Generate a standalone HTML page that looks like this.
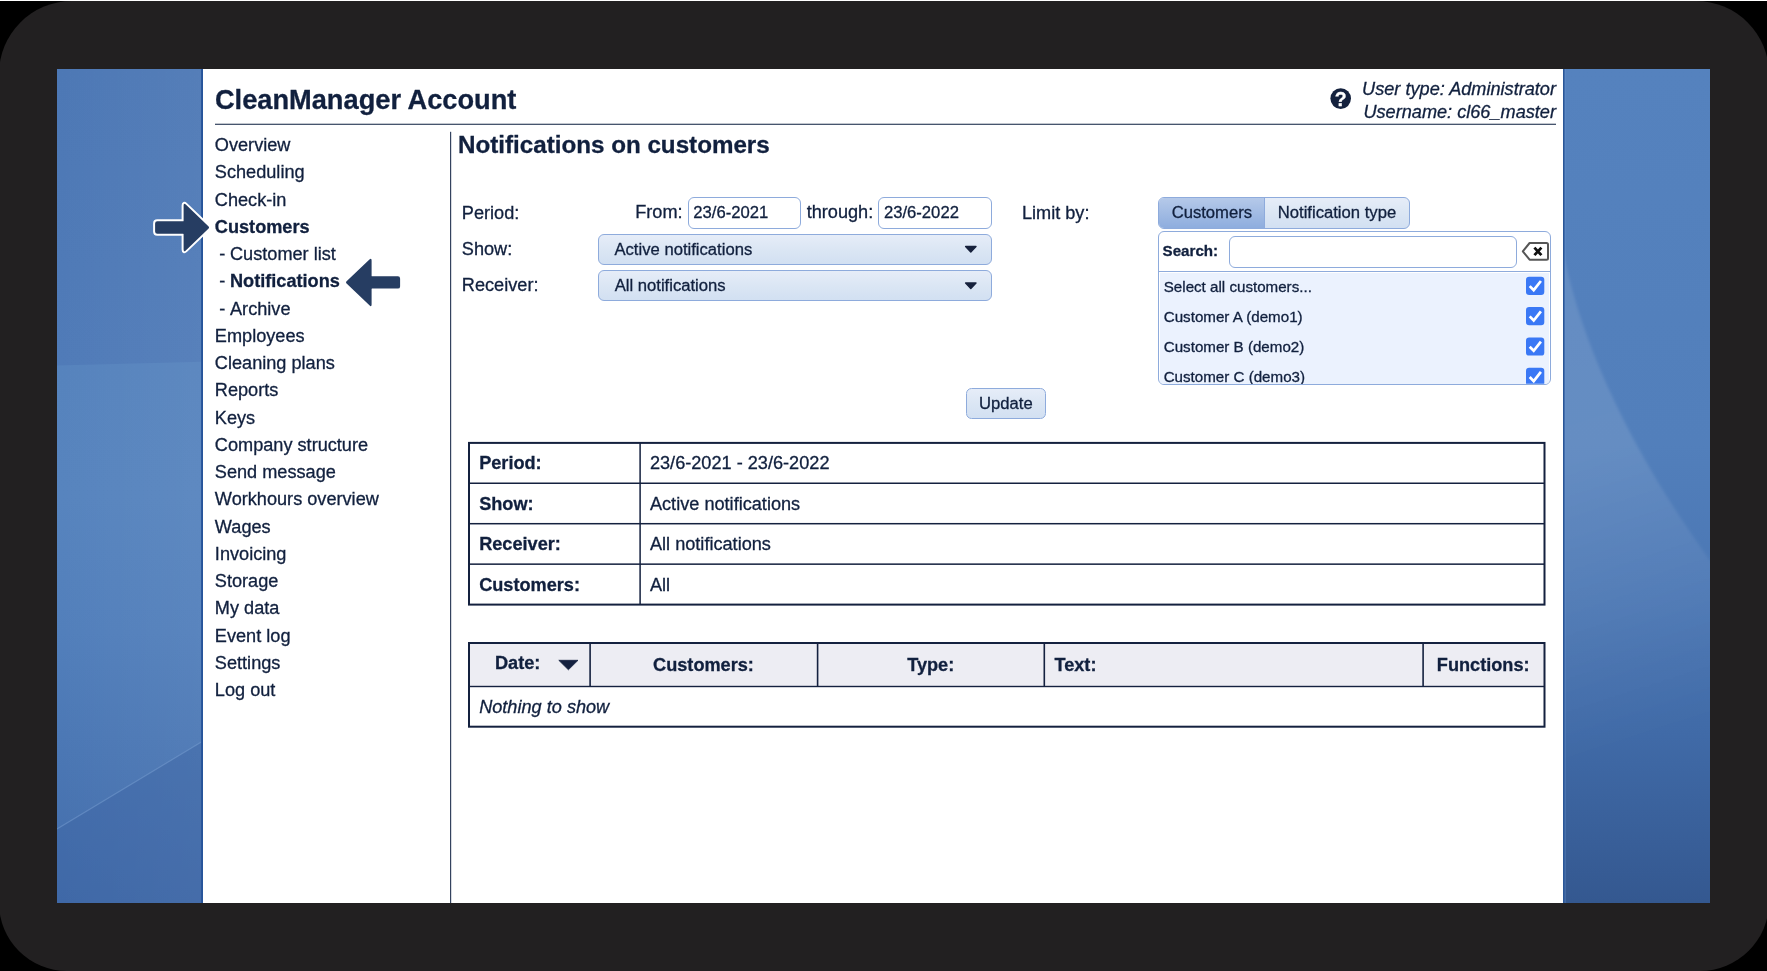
<!DOCTYPE html>
<html><head><meta charset="utf-8"><title>CleanManager Account</title>
<style>
html,body{margin:0;padding:0;}
body{width:1767px;height:971px;overflow:hidden;background:#000;position:relative;font-family:"Liberation Sans",sans-serif;color:#11203e;}
.abs{position:absolute;}
.t{position:absolute;white-space:nowrap;line-height:1;-webkit-text-stroke:0.3px #11203e;}
#topline{left:0;top:0;width:1767px;height:1px;background:#fff;}
#frame{left:-1px;top:1px;width:1769.5px;height:969.5px;border-radius:73px 73px 69px 68px;background:#222021;}
#desk{left:57px;top:69px;width:1653px;height:834px;overflow:hidden;
 background:linear-gradient(180deg,#4d78b5 0%,#507bb8 36%,#4f7bb8 100%);}
#panel{left:203px;top:69px;width:1360px;height:834px;background:#fff;}
.pb{position:absolute;top:69px;width:2px;height:834px;background:#2c5899;}
.sel{position:absolute;box-sizing:border-box;border:1px solid #8eabdc;border-radius:6px;background:linear-gradient(180deg,#e6edf8 0%,#dbe6f4 50%,#d2e0f2 100%);}
.inp{position:absolute;box-sizing:border-box;border:1px solid #8eabdc;border-radius:6px;background:#fff;}
svg{position:absolute;left:0;top:0;overflow:visible;}
</style></head><body>
<div id="root" style="position:absolute;left:0;top:0;width:1767px;height:971px;will-change:transform">
<div id="topline" class="abs"></div>
<div id="frame" class="abs"></div>
<div id="desk" class="abs"></div>

<svg width="1767" height="971" viewBox="0 0 1767 971">
<defs>
<linearGradient id="gR" x1="0" y1="0" x2="0" y2="1"><stop offset="0" stop-color="#5582be"/><stop offset="0.45" stop-color="#527fbb"/><stop offset="0.62" stop-color="#4b77b4"/><stop offset="0.8" stop-color="#406aa7"/><stop offset="1" stop-color="#345890"/></linearGradient>
<linearGradient id="gS" gradientUnits="userSpaceOnUse" x1="1564" y1="300" x2="1700" y2="720"><stop offset="0" stop-color="#fff" stop-opacity="0.10"/><stop offset="0.35" stop-color="#fff" stop-opacity="0.11"/><stop offset="0.7" stop-color="#fff" stop-opacity="0.05"/><stop offset="1" stop-color="#fff" stop-opacity="0"/></linearGradient>
<filter id="bl" x="-10%" y="-10%" width="120%" height="120%"><feGaussianBlur stdDeviation="1.5"/></filter>
<linearGradient id="gL" gradientUnits="userSpaceOnUse" x1="0" y1="362" x2="0" y2="903"><stop offset="0" stop-color="#5683bd"/><stop offset="0.25" stop-color="#5784be"/><stop offset="0.5" stop-color="#527fbb"/><stop offset="0.72" stop-color="#4b77b4"/><stop offset="1" stop-color="#436dab"/></linearGradient>
<linearGradient id="gLx" gradientUnits="userSpaceOnUse" x1="57" y1="0" x2="203" y2="0"><stop offset="0" stop-color="#fff" stop-opacity="0"/><stop offset="1" stop-color="#fff" stop-opacity="0.045"/></linearGradient>
<clipPath id="cd"><rect x="57" y="69" width="1653" height="834"/></clipPath>
</defs>
<g clip-path="url(#cd)">
<rect x="1563" y="69" width="147" height="834" fill="url(#gR)"/>
<path d="M1558 250 L1563 250 C1578 330 1622 440 1714 566 L1714 910 L1558 910 Z" fill="url(#gS)" filter="url(#bl)"/>
<path d="M57 365.5 L203 361.8 L203 903 L57 903 Z" fill="url(#gL)"/>
<rect x="57" y="69" width="146" height="834" fill="url(#gLx)"/>
<path d="M57 829 L203 741 L203 903 L57 903 Z" fill="#3a62a1" opacity="0.36"/>
<path d="M57 829 L203 741" stroke="#7fa3d4" stroke-width="1.2" opacity="0.45" fill="none"/>
</g>
</svg>

<div id="panel" class="abs"></div><svg width="1767" height="971" viewBox="0 0 1767 971"><rect x="201.1" y="69" width="1.9" height="834" fill="#26549a"/><rect x="1563" y="69" width="1.7" height="834" fill="#2a5697"/><rect x="1564.7" y="69" width="0.8" height="834" fill="#6c98d4" opacity="0.6"/></svg>
<div class="t" style="left:214.95px;top:86.16px;font-size:27.22px;font-weight:bold;">CleanManager Account</div>
<div class="t" style="right:211.00px;top:80.34px;font-size:18.15px;font-style:italic;">User type: Administrator</div>
<div class="t" style="right:211.00px;top:102.74px;font-size:18.15px;font-style:italic;">Username: cl66_master</div>
<div class="t" style="left:214.85px;top:136.24px;font-size:18.15px;">Overview</div>
<div class="t" style="left:214.85px;top:163.49px;font-size:18.15px;">Scheduling</div>
<div class="t" style="left:214.85px;top:190.74px;font-size:18.15px;">Check-in</div>
<div class="t" style="left:214.85px;top:217.99px;font-size:18.15px;font-weight:bold;">Customers</div>
<div class="t" style="left:219.25px;top:245.24px;font-size:18.15px;">-</div>
<div class="t" style="left:230.00px;top:245.24px;font-size:18.15px;">Customer list</div>
<div class="t" style="left:219.25px;top:272.49px;font-size:18.15px;">-</div>
<div class="t" style="left:230.00px;top:272.49px;font-size:18.15px;font-weight:bold;">Notifications</div>
<div class="t" style="left:219.25px;top:299.74px;font-size:18.15px;">-</div>
<div class="t" style="left:230.00px;top:299.74px;font-size:18.15px;">Archive</div>
<div class="t" style="left:214.85px;top:326.99px;font-size:18.15px;">Employees</div>
<div class="t" style="left:214.85px;top:354.24px;font-size:18.15px;">Cleaning plans</div>
<div class="t" style="left:214.85px;top:381.49px;font-size:18.15px;">Reports</div>
<div class="t" style="left:214.85px;top:408.74px;font-size:18.15px;">Keys</div>
<div class="t" style="left:214.85px;top:435.99px;font-size:18.15px;">Company structure</div>
<div class="t" style="left:214.85px;top:463.24px;font-size:18.15px;">Send message</div>
<div class="t" style="left:214.85px;top:490.49px;font-size:18.15px;">Workhours overview</div>
<div class="t" style="left:214.85px;top:517.74px;font-size:18.15px;">Wages</div>
<div class="t" style="left:214.85px;top:544.99px;font-size:18.15px;">Invoicing</div>
<div class="t" style="left:214.85px;top:572.24px;font-size:18.15px;">Storage</div>
<div class="t" style="left:214.85px;top:599.49px;font-size:18.15px;">My data</div>
<div class="t" style="left:214.85px;top:626.74px;font-size:18.15px;">Event log</div>
<div class="t" style="left:214.85px;top:653.99px;font-size:18.15px;">Settings</div>
<div class="t" style="left:214.85px;top:681.24px;font-size:18.15px;">Log out</div>
<div class="t" style="left:457.95px;top:133.01px;font-size:24.2px;font-weight:bold;">Notifications on customers</div>
<div class="t" style="left:461.85px;top:203.74px;font-size:18.15px;">Period:</div>
<div class="t" style="left:461.85px;top:239.74px;font-size:18.15px;">Show:</div>
<div class="t" style="left:461.85px;top:276.34px;font-size:18.15px;">Receiver:</div>
<div class="t" style="left:635.25px;top:203.04px;font-size:18.15px;">From:</div>
<div class="t" style="left:806.65px;top:203.04px;font-size:18.15px;">through:</div>
<div class="t" style="left:1021.95px;top:203.74px;font-size:18.15px;">Limit by:</div>
<div class="inp" style="left:687.5px;top:196.8px;width:113.5px;height:32px"></div>
<div class="inp" style="left:877.8px;top:196.8px;width:114px;height:32px"></div>
<div class="t" style="left:693.35px;top:205.11px;font-size:16.65px;">23/6-2021</div>
<div class="t" style="left:883.95px;top:205.11px;font-size:16.65px;">23/6-2022</div>
<div class="sel" style="left:597.7px;top:233.6px;width:394.2px;height:31.3px"></div>
<div class="sel" style="left:597.7px;top:270.1px;width:394.2px;height:31.3px"></div>
<div class="t" style="left:614.45px;top:241.61px;font-size:16.65px;">Active notifications</div>
<div class="t" style="left:614.65px;top:277.51px;font-size:16.65px;">All notifications</div>
<div class="sel" style="left:1157.9px;top:197.4px;width:252.4px;height:31.4px;overflow:hidden"><div style="position:absolute;left:0;top:0;width:104.8px;height:100%;background:linear-gradient(180deg,#b5c9e9,#8eadde);border-right:1px solid #8eabdc"></div></div>
<div class="t" style="left:1171.65px;top:205.11px;font-size:16.65px;">Customers</div>
<div class="t" style="left:1277.75px;top:205.11px;font-size:16.65px;">Notification type</div>
<div class="abs" style="left:1157.9px;top:230.8px;width:393.4px;height:154px;box-sizing:border-box;border:1px solid #8eabdc;border-radius:6px;background:#fff;overflow:hidden"><div style="position:absolute;left:0;top:39.4px;width:100%;height:1px;background:#8eabdc"></div><div style="position:absolute;left:1.3px;top:41.2px;right:1.3px;height:120px;background:#ebf2fe"></div></div>
<div class="t" style="left:1162.55px;top:243.48px;font-size:15.15px;font-weight:bold;">Search:</div>
<div class="inp" style="left:1228.7px;top:235.9px;width:288.6px;height:32px"></div>
<div class="t" style="left:1163.75px;top:279.18px;font-size:15.15px;">Select all customers...</div>
<div class="t" style="left:1163.75px;top:309.48px;font-size:15.15px;">Customer A (demo1)</div>
<div class="t" style="left:1163.75px;top:339.38px;font-size:15.15px;">Customer B (demo2)</div>
<div class="abs" style="left:1160px;top:360px;width:380px;height:23.8px;overflow:hidden"><div class="t" style="left:3.7px;top:9.18px;font-size:15.15px">Customer C (demo3)</div></div>
<div class="sel" style="left:965.8px;top:387.6px;width:80.3px;height:31.2px;border-radius:5.5px"></div>
<div class="t" style="left:1005.90px;transform:translateX(-50%);top:395.51px;font-size:16.65px;">Update</div>
<div class="t" style="left:479.15px;top:454.24px;font-size:18.15px;font-weight:bold;">Period:</div>
<div class="t" style="left:649.95px;top:454.24px;font-size:18.15px;">23/6-2021 - 23/6-2022</div>
<div class="t" style="left:479.15px;top:494.74px;font-size:18.15px;font-weight:bold;">Show:</div>
<div class="t" style="left:649.95px;top:494.74px;font-size:18.15px;">Active notifications</div>
<div class="t" style="left:479.15px;top:535.24px;font-size:18.15px;font-weight:bold;">Receiver:</div>
<div class="t" style="left:649.95px;top:535.24px;font-size:18.15px;">All notifications</div>
<div class="t" style="left:479.15px;top:575.74px;font-size:18.15px;font-weight:bold;">Customers:</div>
<div class="t" style="left:649.95px;top:575.74px;font-size:18.15px;">All</div>
<div class="abs" style="left:469px;top:643px;width:1076px;height:43.5px;background:#ededf3"></div>
<div class="t" style="left:494.95px;top:654.24px;font-size:18.15px;font-weight:bold;">Date:</div>
<div class="t" style="left:703.50px;transform:translateX(-50%);top:655.84px;font-size:18.15px;font-weight:bold;">Customers:</div>
<div class="t" style="left:930.70px;transform:translateX(-50%);top:655.84px;font-size:18.15px;font-weight:bold;">Type:</div>
<div class="t" style="left:1054.45px;top:655.84px;font-size:18.15px;font-weight:bold;">Text:</div>
<div class="t" style="left:1483.20px;transform:translateX(-50%);top:655.84px;font-size:18.15px;font-weight:bold;">Functions:</div>
<div class="t" style="left:479.15px;top:698.34px;font-size:18.15px;font-style:italic;">Nothing to show</div>
<svg width="1767" height="971" viewBox="0 0 1767 971">
<rect x="215" y="123.7" width="1341" height="1.2" fill="#34435f"/>
<rect x="450" y="131.8" width="1.2" height="771.2" fill="#34435f"/>
<circle cx="1340.7" cy="98.6" r="10.3" fill="#14213d"/>
<text x="1340.8" y="105.7" font-family="Liberation Sans" font-weight="bold" font-size="19.4" fill="#fff" stroke="#fff" stroke-width="0.3" text-anchor="middle">?</text>
<rect x="469" y="442.9" width="1075.5" height="161.7" fill="none" stroke="#14213f" stroke-width="2"/>
<rect x="469" y="482.5" width="1075.5" height="1.5" fill="#14213f"/>
<rect x="469" y="522.95" width="1075.5" height="1.5" fill="#14213f"/>
<rect x="469" y="563.4" width="1075.5" height="1.5" fill="#14213f"/>
<rect x="639.35" y="443" width="1.5" height="161.7" fill="#14213f"/>
<rect x="469" y="643" width="1075.5" height="83.7" fill="none" stroke="#14213f" stroke-width="2"/>
<rect x="469" y="685.8" width="1075.5" height="1.4" fill="#14213f"/>
<rect x="589.3000000000001" y="643" width="1.6" height="43.5" fill="#14213f"/>
<rect x="816.8000000000001" y="643" width="1.6" height="43.5" fill="#14213f"/>
<rect x="1043.5" y="643" width="1.6" height="43.5" fill="#14213f"/>
<rect x="1422.3" y="643" width="1.6" height="43.5" fill="#14213f"/>
<path d="M558.8 660.3 L578 660.3 L568.4 669.8 Z" fill="#14213f" stroke="#14213f" stroke-width="0.8" stroke-linejoin="round"/>
<path d="M965.6 246.5 L976 246.5 L970.8 252.1 Z" fill="#17223d" stroke="#17223d" stroke-width="1.4" stroke-linejoin="round"/>
<path d="M965.6 282.90000000000003 L976 282.90000000000003 L970.8 288.5 Z" fill="#17223d" stroke="#17223d" stroke-width="1.4" stroke-linejoin="round"/>
<g><rect x="1526" y="276.8" width="18.3" height="18.2" rx="3.2" fill="#3a78f5"/><path d="M1529.7 286.1 L1533.7 290.2 L1540.9 281.0" fill="none" stroke="#fff" stroke-width="2.7" stroke-linecap="butt" stroke-linejoin="miter"/></g>
<g><rect x="1526" y="307.1" width="18.3" height="18.2" rx="3.2" fill="#3a78f5"/><path d="M1529.7 316.4 L1533.7 320.5 L1540.9 311.3" fill="none" stroke="#fff" stroke-width="2.7" stroke-linecap="butt" stroke-linejoin="miter"/></g>
<g><rect x="1526" y="337.4" width="18.3" height="18.2" rx="3.2" fill="#3a78f5"/><path d="M1529.7 346.7 L1533.7 350.8 L1540.9 341.6" fill="none" stroke="#fff" stroke-width="2.7" stroke-linecap="butt" stroke-linejoin="miter"/></g>
<g clip-path="url(#cpl)"><rect x="1526" y="367.7" width="18.3" height="18.2" rx="3.2" fill="#3a78f5"/><path d="M1529.7 377.0 L1533.7 381.1 L1540.9 371.9" fill="none" stroke="#fff" stroke-width="2.7" stroke-linecap="butt" stroke-linejoin="miter"/></g>
<defs><clipPath id="cpl"><rect x="1158" y="231" width="393" height="152.8"/></clipPath></defs>
<path d="M1529.6 243 L1546.5 243 Q1548 243 1548 244.5 L1548 258.2 Q1548 259.7 1546.5 259.7 L1529.6 259.7 L1522.8 251.3 Z" fill="#fff" stroke="#565656" stroke-width="2" stroke-linejoin="round"/>
<path d="M1534.4 247.6 L1541.4 255.1 M1541.4 247.6 L1534.4 255.1" stroke="#111" stroke-width="2.8" fill="none"/>
<path d="M155.10 223.50 Q155.10 221.30 157.30 221.30 L183.10 221.30 Q183.60 221.30 183.60 220.80 L183.60 205.50 Q183.60 202.50 185.77 204.58 L208.62 226.46 Q209.70 227.50 208.62 228.54 L185.77 250.42 Q183.60 252.50 183.60 249.50 L183.60 234.20 Q183.60 233.70 183.10 233.70 L157.30 233.70 Q155.10 233.70 155.10 231.50 Z" fill="#263d62" stroke="#fff" stroke-width="4" stroke-linejoin="round" paint-order="stroke"/>
<path d="M400.10 278.40 Q400.10 276.20 397.90 276.20 L372.10 276.20 Q371.60 276.20 371.60 275.70 L371.60 260.40 Q371.60 257.40 369.43 259.48 L346.58 281.36 Q345.50 282.40 346.58 283.44 L369.43 305.32 Q371.60 307.40 371.60 304.40 L371.60 289.10 Q371.60 288.60 372.10 288.60 L397.90 288.60 Q400.10 288.60 400.10 286.40 Z" fill="#263d62" stroke="#fff" stroke-width="4" stroke-linejoin="round" paint-order="stroke"/>
</svg>
</div></body></html>
